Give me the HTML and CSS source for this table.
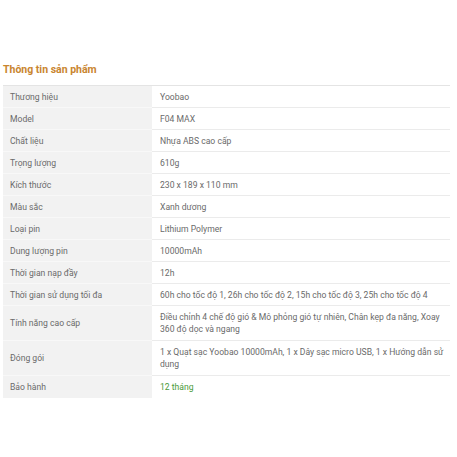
FILE: index.html
```html
<!DOCTYPE html>
<html lang="vi">
<head>
<meta charset="utf-8">
<link rel="stylesheet" href="styles.css">
</head>
<body>
<div class="page">
  <h2 class="title">Thông tin sản phẩm</h2>
  <table class="specs">
    <tr><th>Thương hiệu</th><td>Yoobao</td></tr>
    <tr><th>Model</th><td>F04 MAX</td></tr>
    <tr><th>Chất liệu</th><td>Nhựa ABS cao cấp</td></tr>
    <tr><th>Trọng lượng</th><td>610g</td></tr>
    <tr><th>Kích thước</th><td>230 x 189 x 110 mm</td></tr>
    <tr><th>Màu sắc</th><td>Xanh dương</td></tr>
    <tr><th>Loại pin</th><td>Lithium Polymer</td></tr>
    <tr><th>Dung lượng pin</th><td>10000mAh</td></tr>
    <tr><th>Thời gian nạp đầy</th><td>12h</td></tr>
    <tr><th>Thời gian sử dụng tối đa</th><td>60h cho tốc độ 1, 26h cho tốc độ 2, 15h cho tốc độ 3, 25h cho tốc độ 4</td></tr>
    <tr class="tall"><th>Tính năng cao cấp</th><td>Điều chỉnh 4 chế độ gió &amp; Mô phỏng gió tự nhiên, Chân kẹp đa năng, Xoay 360 độ dọc và ngang</td></tr>
    <tr class="tall"><th>Đóng gói</th><td>1 x Quạt sạc Yoobao 10000mAh, 1 x Dây sạc micro USB, 1 x Hướng dẫn sử dụng</td></tr>
    <tr><th>Bảo hành</th><td class="green">12 tháng</td></tr>
  </table>
</div>
</body>
</html>
```
FILE: styles.css
```css
html, body { margin: 0; padding: 0; background: #fff; }
.page { padding: 62px 4px 0 3px; font-family: Roboto, "Liberation Sans", sans-serif; }
.title { margin: 0 0 7px 0; font-size: 10.5px; font-weight: 700; color: #c9852f; line-height: 16px; }
.specs { width: 447px; border-collapse: collapse; table-layout: fixed; font-size: 8.6px; color: #6a6a6a; }
.specs th, .specs td { box-sizing: border-box; height: 22px; line-height: 12px; border-top: 1px solid #ebebeb; vertical-align: middle; }
.specs th { width: 149px; background: #f2f2f2; text-align: left; font-weight: 400; padding: 0 0 0 7px; border-top-color: #f8f8f8; }
.specs td { padding: 3px 2px 3px 8px; }
.specs tr.tall th, .specs tr.tall td { height: 35px; }
.specs tr:first-child th, .specs tr:first-child td { border-top: 1px solid #e4e4e4; }
.specs .green { color: #4a9a3a; }
```
